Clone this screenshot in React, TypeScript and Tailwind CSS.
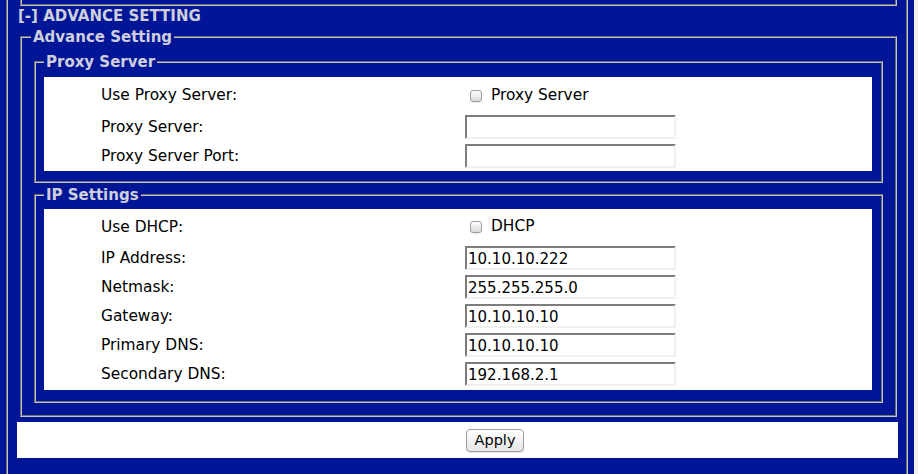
import React from 'react'

const groove = 'border-2 border-[#c4c4c4] [border-style:groove]'
const legendText = 'text-[15px] leading-[18px] font-bold text-[#cfcfdc] px-[2px]'

function Field({ value }: { value?: string }) {
  return (
    <div className="w-[211px] h-[24px] border-2 border-t-[#7d7d7d] border-l-[#7d7d7d] border-r-[#f0f0f0] border-b-[#f0f0f0] bg-white pl-[1px] text-[15px] leading-[22px] text-black whitespace-nowrap overflow-hidden">
      {value}
    </div>
  )
}

function Check({ label }: { label: string }) {
  return (
    <div className="flex items-center pt-[2px]">
      <span className="ml-[5px] mt-[1px] w-[12px] h-[12px] rounded-[3px] border border-[#9d9d9d] bg-linear-to-b from-[#ffffff] to-[#dadada] shadow-[0_1px_1px_rgba(0,0,0,0.08)]" />
      <span className="ml-[9px] text-[15.4px]">{label}</span>
    </div>
  )
}

function Row({ label, h, children }: { label: string; h: string; children: React.ReactNode }) {
  return (
    <div className={`grid grid-cols-[421px_1fr] items-center ${h}`}>
      <div className="pl-[57px] pt-[3px] text-[15.4px] text-black">{label}</div>
      <div>{children}</div>
    </div>
  )
}

export default function App() {
  return (
    <div className="w-[918px] h-[474px] overflow-hidden bg-[#f1f1f1] font-['DejaVu_Sans',Verdana,sans-serif]">
      <div className="w-[914px] h-full bg-[#011597] px-[6px]">
        <div className="h-full border-x-2 border-[#c4c4c4] [border-style:groove] flex flex-col">
          {/* previous section tail */}
          <div className={`ml-[12px] w-[877px] h-[6px] ${groove} border-t-0`} />

          <div className="mt-[1px] h-[19px] pl-[10px] text-[15px] leading-[19px] font-bold text-[#cfcfdc]">
            [-] ADVANCE SETTING
          </div>

          <fieldset className={`mt-[2px] ml-[12px] w-[877px] ${groove} px-[12px] pt-[7px] pb-[12px]`}>
            <legend className={`${legendText} -ml-[3px]`}>Advance Setting</legend>

            <fieldset className={`${groove} pl-[8px] pr-[9px] pt-[6px] pb-[10px]`}>
              <legend className={legendText}>Proxy Server</legend>
              <div className="bg-white pb-[1px]">
                <Row label="Use Proxy Server:" h="h-[35px]">
                  <Check label="Proxy Server" />
                </Row>
                <Row label="Proxy Server:" h="h-[29px]">
                  <Field />
                </Row>
                <Row label="Proxy Server Port:" h="h-[29px]">
                  <Field />
                </Row>
              </div>
            </fieldset>

            <fieldset className={`mt-[3px] ${groove} pl-[8px] pr-[9px] pt-[5px] pb-[11px]`}>
              <legend className={legendText}>IP Settings</legend>
              <div className="bg-white pb-[2px]">
                <Row label="Use DHCP:" h="h-[34px]">
                  <Check label="DHCP" />
                </Row>
                <Row label="IP Address:" h="h-[29px]">
                  <Field value="10.10.10.222" />
                </Row>
                <Row label="Netmask:" h="h-[29px]">
                  <Field value="255.255.255.0" />
                </Row>
                <Row label="Gateway:" h="h-[29px]">
                  <Field value="10.10.10.10" />
                </Row>
                <Row label="Primary DNS:" h="h-[29px]">
                  <Field value="10.10.10.10" />
                </Row>
                <Row label="Secondary DNS:" h="h-[29px]">
                  <Field value="192.168.2.1" />
                </Row>
              </div>
            </fieldset>
          </fieldset>

          <div className="mt-[5px] ml-[9px] w-[881px] h-[36px] bg-white flex items-center pl-[449px]">
            <button className="w-[58px] h-[23px] rounded-[4px] border border-[#9c9c9c] bg-linear-to-b from-[#ffffff] to-[#e6e6e6] text-[14.5px] leading-[20px] text-black shadow-[0_1px_1px_rgba(0,0,0,0.1)]">
              Apply
            </button>
          </div>
        </div>
      </div>
    </div>
  )
}
